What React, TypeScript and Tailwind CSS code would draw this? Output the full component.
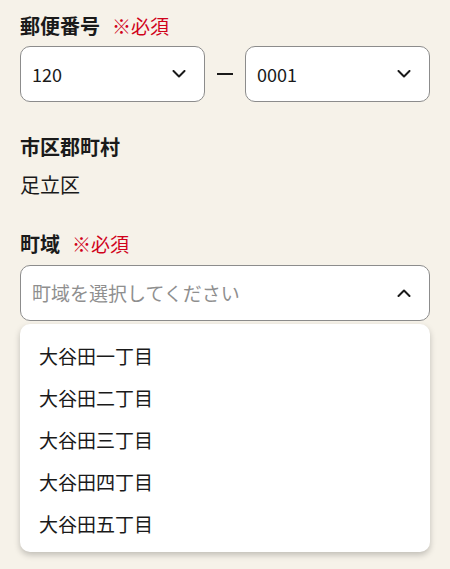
const FONT = "font-['Noto_Sans_CJK_JP','Noto_Sans',sans-serif]";

function Chevron({ up = false }: { up?: boolean }) {
  return (
    <svg width="14" height="8" viewBox="0 0 14 8" fill="none" className="shrink-0">
      <path
        d={up ? "M1.5 7L7 1.5L12.5 7" : "M1.5 1L7 6.5L12.5 1"}
        stroke="#1a1a1a"
        strokeWidth="2"
        strokeLinecap="round"
        strokeLinejoin="round"
      />
    </svg>
  );
}

function Label({ text, required = false }: { text: string; required?: boolean }) {
  return (
    <div className="flex items-center h-[28px] leading-[28px]">
      <span className="text-[20px] font-bold text-[#1a1a1a]">{text}</span>
      {required && (
        <span className="ml-[12px] text-[19px] text-[#d0021b]">※必須</span>
      )}
    </div>
  );
}

function SelectBox({
  value,
  placeholder,
  open = false,
  className = "",
}: {
  value?: string;
  placeholder?: string;
  open?: boolean;
  className?: string;
}) {
  return (
    <div
      className={`flex items-center justify-between h-[56px] pl-[11px] pr-[18px] bg-white border border-[#8c8c8c] rounded-[10px] ${className}`}
    >
      {value ? (
        <span className="text-[18px] text-[#1a1a1a]">{value}</span>
      ) : (
        <span className="text-[19px] text-[#8f8f8f]">{placeholder}</span>
      )}
      <Chevron up={open} />
    </div>
  );
}

const towns = ["大谷田一丁目", "大谷田二丁目", "大谷田三丁目", "大谷田四丁目", "大谷田五丁目"];

export default function App() {
  return (
    <div className={`${FONT} w-[450px] h-[569px] bg-[#f6f2e9] px-[20px] pt-[12px] overflow-hidden`}>
      {/* Postal code */}
      <Label text="郵便番号" required />
      <div className="flex items-center mt-[6px]">
        <SelectBox value="120" className="flex-1" />
        <div className="w-[40px] flex justify-center">
          <div className="w-[16px] h-[2px] bg-[#1a1a1a]" />
        </div>
        <SelectBox value="0001" className="flex-1" />
      </div>

      {/* City */}
      <div className="mt-[31px]">
        <Label text="市区郡町村" />
      </div>
      <div className="mt-[10px] h-[28px] leading-[28px] text-[20px] text-[#1a1a1a]">足立区</div>

      {/* Town */}
      <div className="mt-[31px]">
        <Label text="町域" required />
      </div>
      <SelectBox placeholder="町域を選択してください" open className="mt-[7px]" />

      {/* Dropdown list */}
      <div className="mt-[3px] bg-white rounded-[10px] shadow-[0_3px_6px_rgba(0,0,0,0.22)] pt-[11px] pb-[7px]">
        {towns.map((t) => (
          <div key={t} className="h-[42px] flex items-center px-[19px] text-[19px] text-[#1a1a1a]">
            {t}
          </div>
        ))}
      </div>
    </div>
  );
}
